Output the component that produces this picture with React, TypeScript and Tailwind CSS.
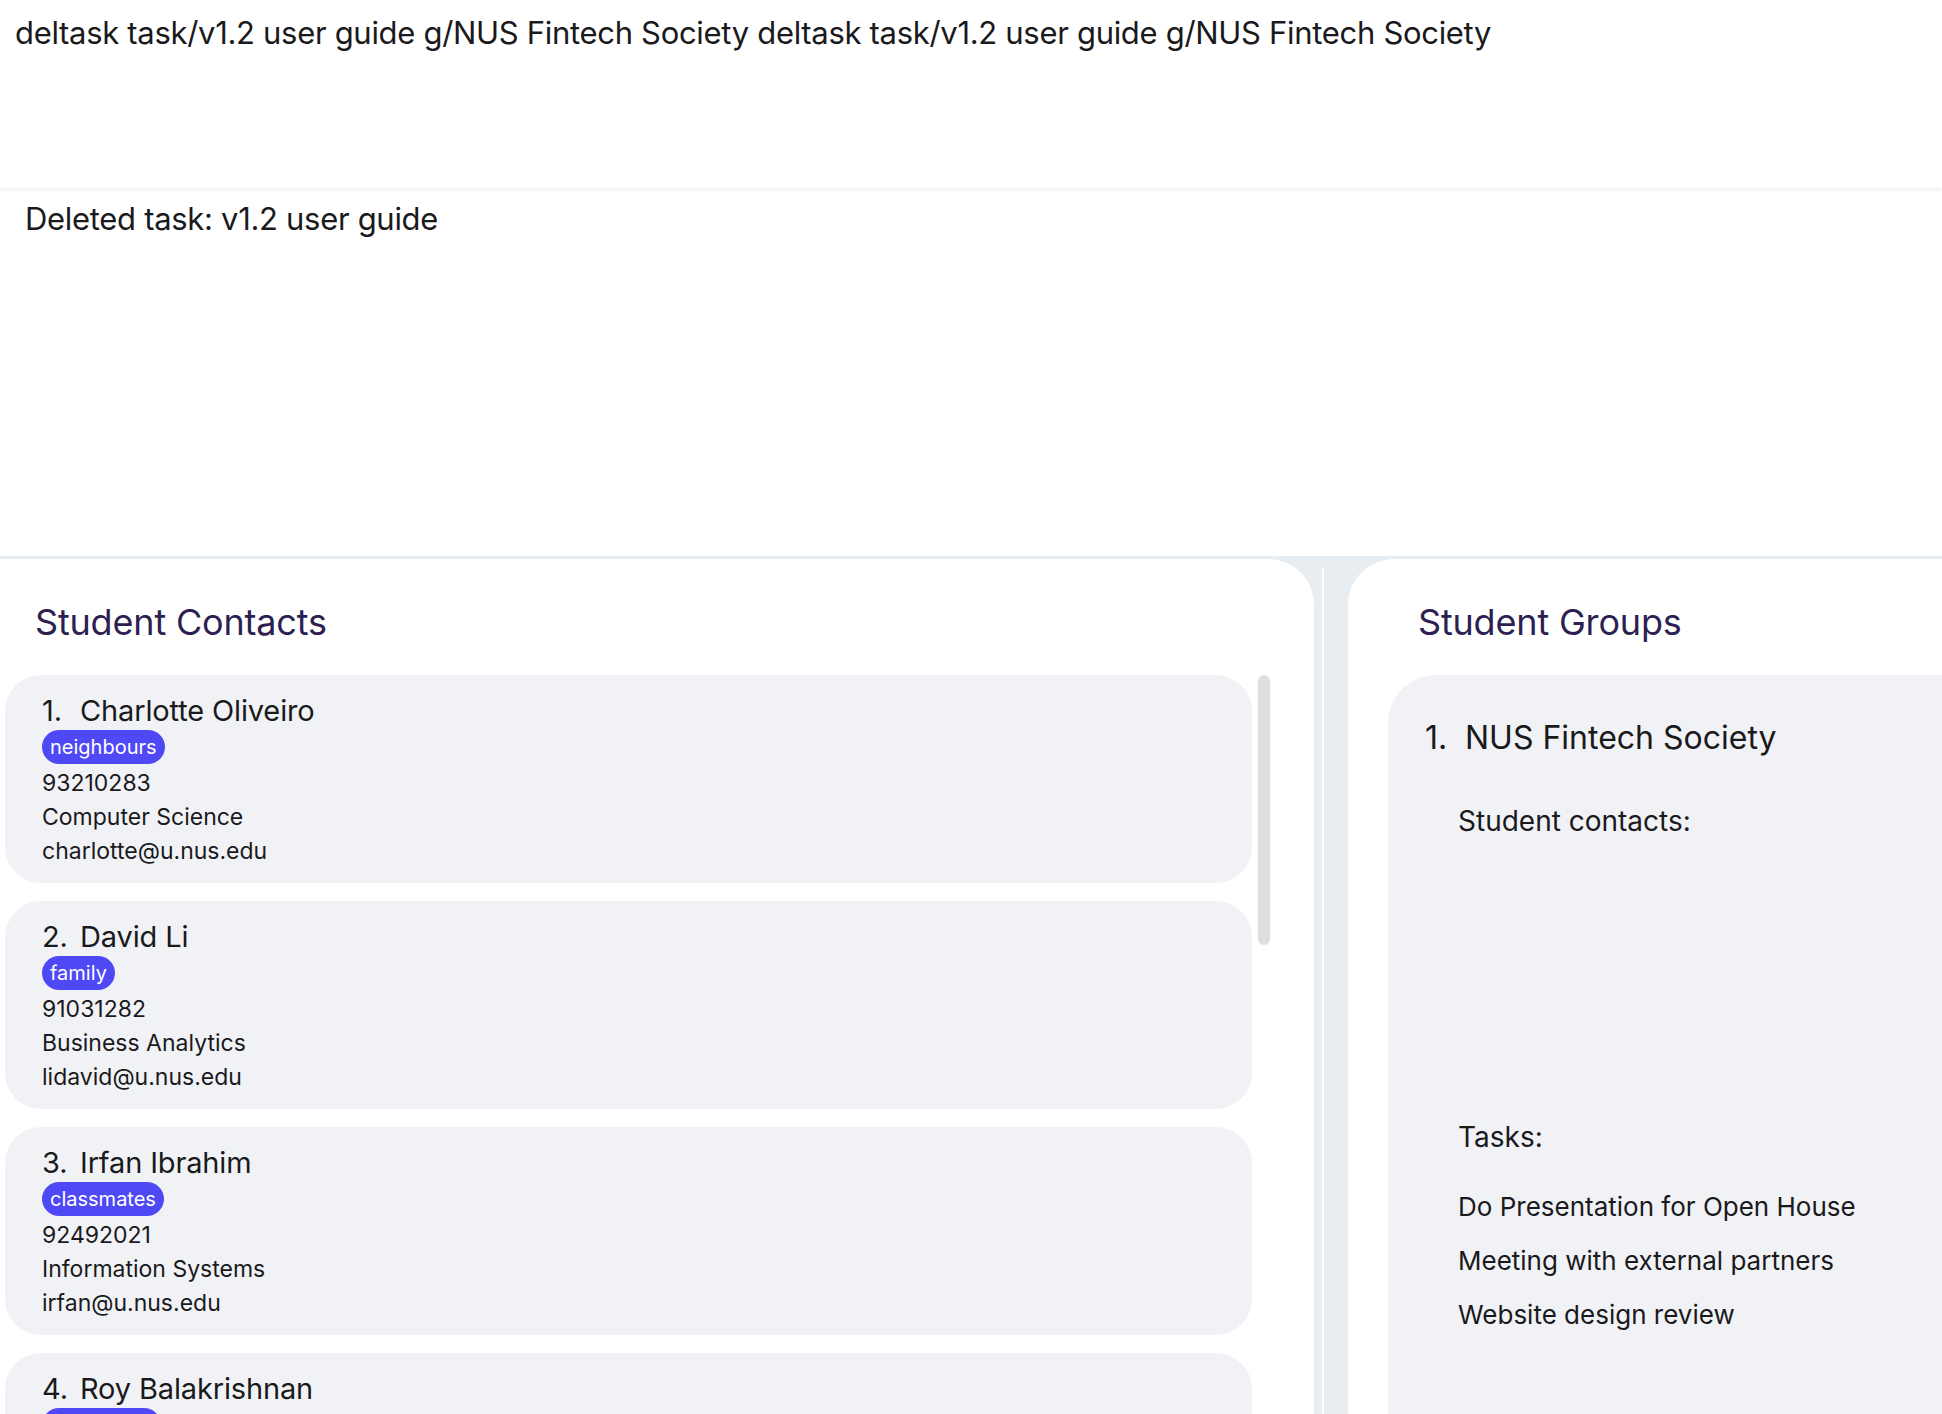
import React from 'react';

interface Contact {
  name: string;
  tag: string;
  phone: string;
  major: string;
  email: string;
}

const contacts: Contact[] = [
  { name: 'Charlotte Oliveiro', tag: 'neighbours', phone: '93210283', major: 'Computer Science', email: 'charlotte@u.nus.edu' },
  { name: 'David Li', tag: 'family', phone: '91031282', major: 'Business Analytics', email: 'lidavid@u.nus.edu' },
  { name: 'Irfan Ibrahim', tag: 'classmates', phone: '92492021', major: 'Information Systems', email: 'irfan@u.nus.edu' },
  { name: 'Roy Balakrishnan', tag: 'colleagues', phone: '92624417', major: 'Data Science', email: 'roy@u.nus.edu' },
];

const tasks = ['Do Presentation for Open House', 'Meeting with external partners', 'Website design review'];

const command =
  'deltask task/v1.2 user guide g/NUS Fintech Society deltask task/v1.2 user guide g/NUS Fintech Society';

export default function App() {
  return (
    <div className="h-[1414px] w-full overflow-hidden bg-white font-['Inter',sans-serif] text-[#1a1a1c] flex flex-col">
      <CommandBox />
      <ResultBox />
      <div className="flex-1 flex min-h-0 bg-[#e8edf1] pt-[3px]">
        <ContactsPanel />
        <div className="w-[34px] shrink-0 pl-[8px] pt-[8px]">
          <div className="w-[2px] h-full bg-white/90" />
        </div>
        <GroupsPanel />
      </div>
    </div>
  );
}

function CommandBox() {
  return (
    <div className="relative z-10 h-[188px] shrink-0 bg-white px-[15px] pt-[13px] shadow-[0_2px_4px_rgba(0,0,0,0.07)]">
      <p className="text-[31px] leading-[40px] tracking-[-0.01em] whitespace-nowrap">{command}</p>
    </div>
  );
}

function ResultBox() {
  return (
    <div className="h-[368px] shrink-0 ml-[4px] bg-white pl-[21px] pt-[11px]">
      <p className="text-[31px] leading-[40px] tracking-[-0.01em]">Deleted task: v1.2 user guide</p>
    </div>
  );
}

function ContactsPanel() {
  return (
    <div className="w-[1314px] shrink-0 bg-white rounded-tr-[46px] flex flex-col">
      <h2 className="pl-[35px] pt-[41px] h-[116px] shrink-0 text-[36px] leading-[44px] tracking-[-0.005em] text-[#2d1f52]">
        Student Contacts
      </h2>
      <div className="flex gap-[6px]">
        <div className="w-[1247px] ml-[5px] flex flex-col gap-[18px]">
          {contacts.map((c, i) => (
            <ContactCard key={c.name} index={i + 1} contact={c} />
          ))}
        </div>
        <div className="w-[12px] h-[270px] rounded-full bg-[#dfdfdf]" />
      </div>
    </div>
  );
}

function ContactCard({ index, contact }: { index: number; contact: Contact }) {
  return (
    <div className="bg-[#f1f2f6] rounded-[36px] pl-[37px] pt-[18px] pb-[15px]">
      <div className="flex text-[29px] leading-[36px] tracking-[-0.005em]">
        <span className="w-[38px]">{index}.</span>
        <span>{contact.name}</span>
      </div>
      <div className="flex mt-[1px]">
        <span className="h-[34px] px-[8px] rounded-full bg-[#4f48f5] text-white text-[20px] leading-[34px]">
          {contact.tag}
        </span>
      </div>
      <div className="mt-[2px] text-[23px] leading-[34px]">
        <p>{contact.phone}</p>
        <p>{contact.major}</p>
        <p>{contact.email}</p>
      </div>
    </div>
  );
}

function GroupsPanel() {
  return (
    <div className="flex-1 bg-white rounded-tl-[46px] flex flex-col">
      <h2 className="pl-[70px] pt-[41px] h-[116px] shrink-0 text-[36px] leading-[44px] tracking-[-0.005em] text-[#2d1f52]">
        Student Groups
      </h2>
      <div className="flex-1 ml-[40px] bg-[#f1f2f6] rounded-tl-[48px] pl-[37px] pt-[43px]">
        <div className="flex text-[32px] leading-[40px]">
          <span className="w-[40px]">1.</span>
          <span>NUS Fintech Society</span>
        </div>
        <div className="pl-[33px]">
          <p className="mt-[45px] text-[28px] leading-[36px]">Student contacts:</p>
          <div className="h-[280px]" />
          <p className="text-[28px] leading-[36px]">Tasks:</p>
          <ul className="mt-[34px] flex flex-col gap-[18px] text-[26px] leading-[36px]">
            {tasks.map((t) => (
              <li key={t}>{t}</li>
            ))}
          </ul>
        </div>
      </div>
    </div>
  );
}
